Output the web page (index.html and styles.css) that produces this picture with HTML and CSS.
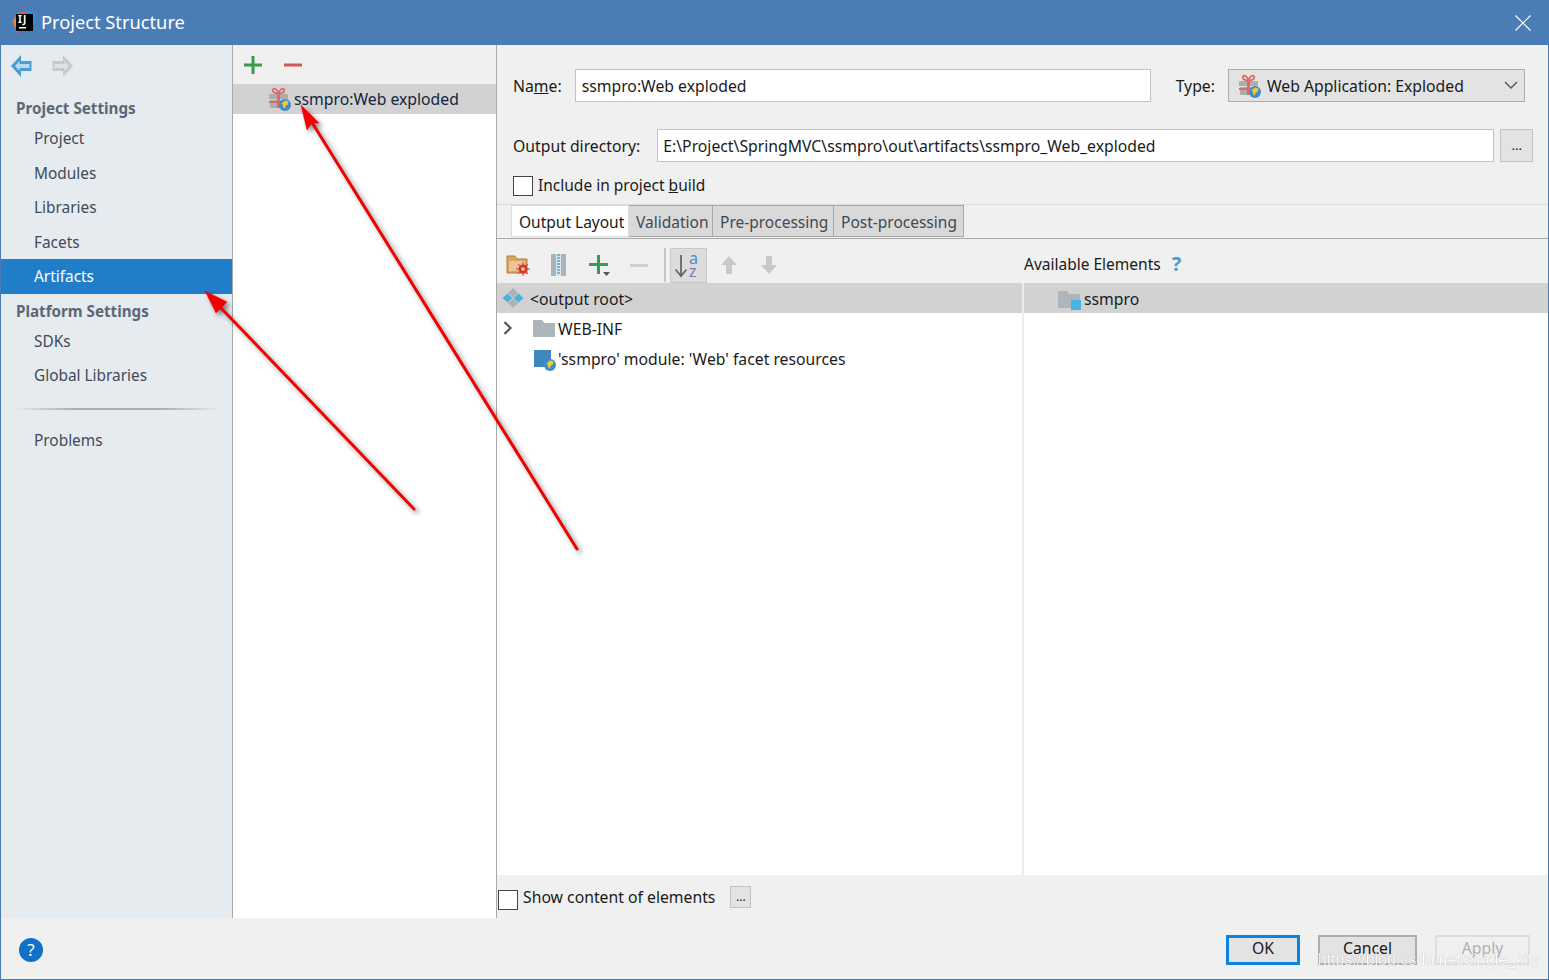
FILE: index.html
```html
<!DOCTYPE html>
<html lang="en">
<head>
<meta charset="utf-8">
<title>Project Structure</title>
<link rel="stylesheet" href="styles.css">
</head>
<body>
<svg class="defs" width="0" height="0" aria-hidden="true">
  <defs>
    <symbol id="gift" viewBox="0 0 22 24">
      <rect x="0" y="7" width="19" height="5" fill="#adadad"/>
      <rect x="1" y="13" width="17" height="8" fill="#adadad"/>
      <rect x="8" y="7" width="3" height="14" fill="#dc6a6a"/>
      <rect x="0" y="14" width="19" height="2" fill="#dc6a6a"/>
      <path d="M9.500 6.500C5 6.500 3 4.500 4 2.500C5 .8 8.500 2 9.500 6.500C10.500 2 14 .8 15 2.500C16 4.500 14 6.500 9.500 6.500Z" fill="none" stroke="#dc6a6a" stroke-width="1.700"/>
      <circle cx="16" cy="18" r="6" fill="#3d8ec9"/>
      <path d="M12.500 16.500l3.500-3 3.500 1-.8 3.300-2.200 1-.5 3-2-1.800v-2.200z" fill="#f4c82f"/>
    </symbol>
    <symbol id="globe" viewBox="0 0 12 12">
      <circle cx="6" cy="6" r="6" fill="#3d8ec9"/>
      <path d="M2.500 4.500l3.500-3 3.500 1-.8 3.300-2.200 1-.5 3-2-1.800V5.800z" fill="#f4c82f"/>
    </symbol>
    <symbol id="folder" viewBox="0 0 22 17">
      <path d="M0 0h9l2.500 3H22v14H0z" fill="#aeb6bc"/>
    </symbol>
  </defs>
</svg>

<div class="window">
  <header class="titlebar">
    <svg class="app-logo" width="26" height="26" viewBox="0 0 26 26" aria-hidden="true">
      <path d="M2 11L6 3l9-2v10L6 24 3 15z" fill="#f0555f"/>
      <path d="M15 1h9l1 8-4 8-7-6z" fill="#2f8ee8"/>
      <path d="M2 10l6-3v10H4z" fill="#f58a1f"/>
      <rect x="5" y="4" width="17" height="17" fill="#000"/>
      <rect x="8" y="17" width="7" height="1.500" fill="#fff"/>
    </svg>
    <span class="app-ij">IJ</span>
    <span class="title-text">Project Structure</span>
    <svg class="close-x" width="16" height="16" viewBox="0 0 16 16" aria-hidden="true">
      <path d="M.5.500l15 15M15.500.500l-15 15" stroke="#fff" stroke-width="1.200" fill="none"/>
    </svg>
  </header>

  <div class="main">
    <aside class="sidebar">
      <div class="nav-arrows">
        <svg width="21" height="22" viewBox="0 0 21 22" aria-hidden="true"><path d="M0 11L10 0v6h10.500v10H10v6z" fill="#4a9bd4"/><path d="M4 11l4.500-5v3h10v4h-10v3z" fill="#b9d9ef"/></svg>
        <svg width="21" height="22" viewBox="0 0 21 22" aria-hidden="true"><path d="M21 11L11 0v6H.5v10H11v6z" fill="#c6c8ca"/><path d="M17 11l-4.500-5v3h-10v4h10v3z" fill="#dfe2e5"/></svg>
      </div>
      <div class="nav-head head-first">Project Settings</div>
      <div class="nav-item nav-top">Project</div>
      <div class="nav-item">Modules</div>
      <div class="nav-item">Libraries</div>
      <div class="nav-item">Facets</div>
      <div class="nav-item nav-active">Artifacts</div>
      <div class="nav-head head-second">Platform Settings</div>
      <div class="nav-item nav-sdk">SDKs</div>
      <div class="nav-item">Global Libraries</div>
      <div class="nav-rule"></div>
      <div class="nav-item">Problems</div>
    </aside>

    <section class="list-pane">
      <div class="list-tools">
        <svg width="20" height="20" viewBox="0 0 20 20" aria-hidden="true"><path d="M8.500 1h3v7.500H19v3h-7.500V19h-3v-7.500H1v-3h7.500z" fill="#3a9b4f"/></svg>
        <svg width="20" height="20" viewBox="0 0 20 20" aria-hidden="true"><rect x="1" y="8.500" width="18" height="3" fill="#cf5b4f"/></svg>
      </div>
      <div class="list-body">
        <div class="list-row">
          <svg class="row-gift" width="22" height="24" aria-hidden="true"><use href="#gift"/></svg>
          <span>ssmpro:Web exploded</span>
        </div>
      </div>
    </section>

    <section class="detail">
      <div class="form">
        <div class="form-row row-name">
          <label class="lbl">Na<u>m</u>e:</label>
          <div class="input input-name">ssmpro:Web exploded</div>
          <label class="lbl lbl-type">Type:</label>
          <div class="select">
            <svg width="22" height="24" aria-hidden="true"><use href="#gift"/></svg>
            <span class="select-text">Web Application: Exploded</span>
            <svg class="chev" width="14" height="9" viewBox="0 0 14 9" aria-hidden="true"><path d="M1 1l6 6 6-6" stroke="#5a5a5a" stroke-width="1.500" fill="none"/></svg>
          </div>
        </div>
        <div class="form-row row-output">
          <label class="lbl">Output directory:</label>
          <div class="input input-output">E:\Project\SpringMVC\ssmpro\out\artifacts\ssmpro_Web_exploded</div>
          <div class="dots-btn">...</div>
        </div>
        <div class="check-row row-include">
          <span class="check"></span>
          <span>Include in project <u>b</u>uild</span>
        </div>
      </div>

      <div class="tabs">
        <div class="tab tab-on">Output Layout</div>
        <div class="tab tab-val"><span>Validation</span></div>
        <div class="tab tab-pre">Pre-processing</div>
        <div class="tab tab-post">Post-processing</div>
      </div>

      <div class="tools">
        <div class="tools-left">
          <svg class="t1" width="24" height="22" viewBox="0 0 24 22" aria-hidden="true">
            <path d="M1 2h8l2 3h10v14H1z" fill="#d9a566" stroke="#b5803c"/>
            <rect x="3" y="7" width="16" height="10" fill="#e8c697"/>
            <path d="M17 8v14M10 15h14M12 10l10 10M22 10L12 20" stroke="#d9362b" stroke-width="1"/>
            <circle cx="17" cy="15" r="4.500" fill="#d9362b"/>
            <circle cx="17" cy="15" r="1.800" fill="#f6d9a0"/>
          </svg>
          <svg class="t2" width="18" height="22" viewBox="0 0 18 22" aria-hidden="true">
            <rect x="1" y="0" width="15" height="22" rx="1" fill="#a9b3b9"/>
            <rect x="6" y="0" width="5" height="22" fill="#dfe7ea"/>
            <path d="M7 1h3M7 4h3M7 7h3M7 10h3M7 13h3M7 16h3M7 19h3" stroke="#45a7d6" stroke-width="1.500"/>
          </svg>
          <svg class="t3" width="24" height="22" viewBox="0 0 24 22" aria-hidden="true">
            <path d="M9 1h3v8h8v3h-8v8H9v-8H1V9h8z" fill="#3a9b4f"/>
            <path d="M15 18h7l-3.500 4z" fill="#555"/>
          </svg>
          <svg class="t4" width="20" height="22" viewBox="0 0 20 22" aria-hidden="true"><rect x="1" y="10" width="18" height="3" fill="#cfcfcf"/></svg>
          <span class="tool-sep"></span>
          <span class="sort-btn">
            <svg width="20" height="28" viewBox="0 0 20 28" aria-hidden="true">
              <path d="M7 4v21M1.500 18.500L7 25l5.500-6.500" stroke="#666" stroke-width="1.800" fill="none"/>
            </svg>
            <span class="sort-a">a</span><span class="sort-z">z</span>
          </span>
          <svg class="t5" width="18" height="20" viewBox="0 0 18 20" aria-hidden="true"><path d="M9 1l8 9h-5v9H6v-9H1z" fill="#c9c9c9"/></svg>
          <svg class="t6" width="18" height="20" viewBox="0 0 18 20" aria-hidden="true"><path d="M9 19l8-9h-5V1H6v9H1z" fill="#c9c9c9"/></svg>
        </div>
        <div class="tools-right">
          <span>Available Elements</span>
          <span class="q-mark">?</span>
        </div>
      </div>

      <div class="trees">
        <div class="tree tree-left">
          <div class="tree-row tree-sel">
            <svg class="root-ic" width="22" height="20" viewBox="0 0 22 20" aria-hidden="true">
              <path d="M11 0l5 5-5 4.500L6 5z" fill="#a9b3b9"/>
              <path d="M5.500 5.500l5 4.500-5 4.500L.5 10z" fill="#4fb0de"/>
              <path d="M16.500 5.500l5 4.500-5 4.500-5-4.500z" fill="#4fb0de"/>
              <path d="M11 10.500l5 4.500-5 5-5-5z" fill="#a9b3b9"/>
            </svg>
            <span>&lt;output root&gt;</span>
          </div>
          <div class="tree-row row-webinf">
            <svg class="tw" width="10" height="14" viewBox="0 0 10 14" aria-hidden="true"><path d="M1.500 1l6 6-6 6" stroke="#555" stroke-width="2.200" fill="none"/></svg>
            <svg class="fold" width="22" height="17" aria-hidden="true"><use href="#folder"/></svg>
            <span>WEB-INF</span>
          </div>
          <div class="tree-row row-facet">
            <span class="facet-ic">
              <svg class="globe" width="12" height="12" aria-hidden="true"><use href="#globe"/></svg>
            </span>
            <span>'ssmpro' module: 'Web' facet resources</span>
          </div>
        </div>
        <div class="tree tree-right">
          <div class="tree-row tree-sel">
            <span class="module-ic">
              <svg width="22" height="17" aria-hidden="true"><use href="#folder"/></svg>
              <span class="module-sq"></span>
            </span>
            <span>ssmpro</span>
          </div>
        </div>
      </div>

      <div class="show-row">
        <span class="check"></span>
        <span class="show-text">Show content of elements</span>
        <span class="mini-btn">...</span>
      </div>
    </section>
  </div>

  <footer class="footer">
    <span class="help">?</span>
    <div class="buttons">
      <div class="btn btn-ok">OK</div>
      <div class="btn btn-cancel">Cancel</div>
      <div class="btn btn-apply">Apply</div>
    </div>
    <span class="watermark">https://blog.csdn.net/single_kity</span>
  </footer>

  <svg class="arrows" width="1549" height="980" viewBox="0 0 1549 980" aria-hidden="true">
    <path class="arrow-line" d="M221 308L414 509"/>
    <path class="arrow-head" d="M205 291L227 302 222 307 216 313z"/>
    <path class="arrow-line" d="M313 124L577 549"/>
    <path class="arrow-head" d="M301 105L319 123 312 123 307 130z"/>
  </svg>
</div>
</body>
</html>
```
FILE: styles.css
```css
* { box-sizing: border-box; }
html, body { margin: 0; padding: 0; }
body {
  width: 1549px;
  height: 980px;
  overflow: hidden;
  background: #f0f0f0;
  font-family: "Noto Sans", "Open Sans", sans-serif;
  font-size: 15.750px;
  color: #1a1a1a;
}
.defs { position: absolute; }
.window {
  position: relative;
  width: 1549px;
  height: 980px;
  display: flex;
  flex-direction: column;
  border: 1px solid #4a7cb5;
  border-top: 0;
  background: #f0f0f0;
}
.titlebar {
  position: relative;
  height: 45px;
  flex: none;
  margin: 0 -1px;
  padding: 0 0 2px 11px;
  display: flex;
  align-items: center;
  background: #4a7cb5;
  color: #fff;
}
.app-logo { margin-top: 2px; }
.app-ij {
  position: absolute;
  left: 18px;
  top: 12px;
  font-size: 10px;
  line-height: 14px;
  font-weight: 700;
  letter-spacing: 1px;
  color: #fff;
}
.title-text { margin-left: 4px; font-size: 18.250px; }
.close-x { margin-left: auto; margin-right: 18px; margin-top: 2px; }

.main { flex: 1; display: flex; min-height: 0; }
.sidebar {
  width: 232px;
  flex: none;
  background: #e6ebf0;
  border-right: 1px solid #a8a8a8;
  display: flex;
  flex-direction: column;
  color: #3f4a55;
  font-size: 15.400px;
}
.nav-arrows { display: flex; gap: 20px; padding: 10px 0 0 10px; height: 48px; }
.nav-head {
  padding-left: 15px;
  font-weight: 700;
  color: #5b6875;
  line-height: 30px;
  height: 30px;
  font-size: 15.200px;
}
.head-second { height: 34px; line-height: 34px; }
.nav-item { height: 34.500px; line-height: 34.500px; padding: 1px 0 0 33px; }
.nav-top { height: 32.500px; line-height: 30px; }
.nav-sdk { height: 32px; line-height: 30px; margin-top: -2px; }
.nav-active { background: #1f7dc9; color: #fff; }
.nav-rule {
  height: 2px;
  margin: 16px 10px 13px 12px;
  background: linear-gradient(90deg, #e6ebf0, #a8adb3 30%, #a8adb3 70%, #e6ebf0);
}

.list-pane {
  width: 264px;
  flex: none;
  display: flex;
  flex-direction: column;
  border-right: 1px solid #a8a8a8;
}
.list-tools {
  height: 39px;
  flex: none;
  display: flex;
  gap: 20px;
  padding: 10px 0 0 10px;
  background: #f0f0f0;
}
.list-body { flex: 1; background: #fff; }
.list-row {
  height: 30px;
  display: flex;
  align-items: center;
  padding-left: 36px;
  background: #d2d2d2;
  color: #14243c;
}
.row-gift { margin-right: 3px; margin-top: -1px; }

.detail { flex: 1; min-width: 0; display: flex; flex-direction: column; }
.form { height: 159px; flex: none; padding-left: 16px; }
.form-row { display: flex; align-items: center; }
.row-name { padding-top: 24px; height: 57px; }
.lbl { white-space: nowrap; }
.input {
  height: 33px;
  line-height: 32px;
  padding: 0 0 0 6px;
  background: #fff;
  border: 1.500px solid #c2c2c2;
  white-space: nowrap;
}
.input-name { width: 576px; margin-left: 13px; }
.lbl-type { margin-left: 25px; }
.select {
  width: 297px;
  height: 33px;
  margin-left: 13px;
  display: flex;
  align-items: center;
  padding-left: 10px;
  background: #e3e3e3;
  border: 1.500px solid #adadad;
}
.select-text { margin-left: 6px; }
.chev { margin-left: auto; margin-right: 6px; }
.row-output { padding-top: 27px; height: 60px; }
.input-output { width: 837px; margin-left: 17px; padding-left: 5px; }
.dots-btn {
  width: 33px;
  height: 33px;
  margin-left: 6px;
  background: #e3e3e3;
  border: 1.500px solid #c2c2c2;
  text-align: center;
  line-height: 30px;
  font-size: 13px;
}
.check-row { display: flex; align-items: center; gap: 5px; }
.row-include { padding-top: 12px; font-size: 15.500px; }
.row-include .check { margin-top: 2px; }
.check {
  width: 20px;
  height: 20px;
  flex: none;
  background: #fff;
  border: 1.500px solid #444;
}

.tabs {
  height: 33px;
  flex: none;
  display: flex;
  padding-left: 14px;
  border-top: 1px solid #dcdcdc;
  border-bottom: 1px solid #a8a8a8;
  box-sizing: content-box;
}
.tab {
  height: 32px;
  line-height: 32px;
  padding-left: 7px;
  background: #d9d9d9;
  border: 1px solid #a8a8a8;
  border-left-width: 0;
  font-size: 15.500px;
  color: #3f4a55;
  white-space: nowrap;
  overflow: hidden;
}
.tab-on {
  width: 118px;
  background: #fff;
  border-color: #dcdcdc;
  border-left-width: 1px;
  color: #1a1a1a;
}
.tab-val { width: 84px; }
.tab-val span { display: block; width: 72px; overflow: hidden; }
.tab-pre { width: 121px; }
.tab-post { width: 130px; }

.tools {
  height: 44px;
  flex: none;
  display: flex;
  padding-top: 8px;
}
.tools-left { width: 527px; flex: none; position: relative; display: flex; align-items: center; padding-left: 9px; }
.t2 { margin-left: 20px; }
.t3 { margin-left: 20px; }
.t4 { margin-left: 17px; }
.tool-sep { width: 2px; height: 34px; margin-left: 15px; background: #c4c4c4; }
.sort-btn {
  position: relative;
  width: 37px;
  height: 35px;
  margin-left: 4px;
  background: #dcdcdc;
  border: 1px solid #c8c8c8;
  display: flex;
  align-items: center;
  padding-left: 3px;
}
.sort-a, .sort-z {
  position: absolute;
  left: 18px;
  font-size: 16px;
  line-height: 13px;
}
.sort-a { top: 3px; color: #3a8fd0; }
.sort-z { top: 16px; color: #8a70b8; }
.t5 { margin-left: 13px; }
.t6 { margin-left: 22px; }
.tools-right { display: flex; align-items: center; gap: 11px; font-size: 15.500px; padding-bottom: 3px; }
.q-mark { color: #4c9ad0; font-weight: 700; font-size: 20px; line-height: 20px; }

.trees { flex: 1; display: flex; min-height: 0; background: #fff; }
.tree-left { width: 527px; flex: none; border-right: 2px solid #ececec; }
.tree-right { flex: 1; }
.tree-row {
  height: 30px;
  display: flex;
  align-items: center;
  padding-top: 2px;
}
.tree-sel { background: #d2d2d2; }
.tree-left .tree-sel { padding-left: 5px; }
.root-ic { margin-right: 6px; margin-top: -2px; }
.row-webinf { padding-left: 6px; }
.fold { margin-left: 20px; margin-right: 3px; margin-top: -2px; }
.tw { flex: none; margin-top: -2px; }
.row-facet { padding-left: 37px; }
.facet-ic {
  position: relative;
  width: 17px;
  height: 17px;
  margin-right: 7px;
  margin-top: -2px;
  background: #3f87bf;
}
.globe { position: absolute; right: -5px; bottom: -4px; }
.tree-right .tree-sel { padding-left: 34px; }
.module-ic { position: relative; width: 22px; height: 17px; margin-right: 4px; display: flex; }
.module-sq { position: absolute; right: -1px; bottom: -2px; width: 10px; height: 10px; background: #47b4e4; }

.show-row {
  height: 43px;
  flex: none;
  display: flex;
  align-items: center;
  padding-left: 1px;
}
.show-row .check { margin-top: 6px; }
.show-text { margin-left: 5px; }
.mini-btn {
  width: 21px;
  height: 22px;
  margin-left: 15px;
  background: #e3e3e3;
  border: 1.500px solid #c2c2c2;
  text-align: center;
  line-height: 20px;
  font-size: 12px;
}

.footer {
  position: relative;
  height: 61px;
  flex: none;
  display: flex;
  align-items: center;
  padding-left: 18px;
  background: #f0f0f0;
}
.help {
  width: 24px;
  height: 24px;
  margin-top: 3px;
  border-radius: 50%;
  background: #0f72c8;
  color: #fff;
  text-align: center;
  font-size: 17px;
  line-height: 24px;
}
.buttons { margin-left: auto; margin-right: 18px; display: flex; gap: 18px; margin-top: 3px; }
.btn {
  width: 74px;
  height: 30px;
  background: #e3e3e3;
  border: 2px solid #adadad;
  text-align: center;
  line-height: 22px;
}
.btn-ok { border: 3px solid #0a84e0; line-height: 20px; }
.btn-cancel { width: 99px; }
.btn-apply { width: 95px; background: #f0f0f0; border-color: #dedede; color: #b0b0b0; }
.watermark {
  position: absolute;
  right: 8px;
  top: 33px;
  color: #fff;
  text-shadow: 0 0 1px #8a8a8a;
  font-family: "Liberation Sans", sans-serif;
  font-size: 16px;
  opacity: .8;
}
.arrows {
  position: absolute;
  left: -1px;
  top: 0;
  pointer-events: none;
  filter: drop-shadow(3px 3px 2.500px rgba(0, 0, 0, .45));
}
.arrow-line { stroke: #f00000; stroke-width: 3; fill: none; stroke-linecap: round; }
.arrow-head { fill: #f00000; stroke: #f00000; stroke-width: .5; }
```
